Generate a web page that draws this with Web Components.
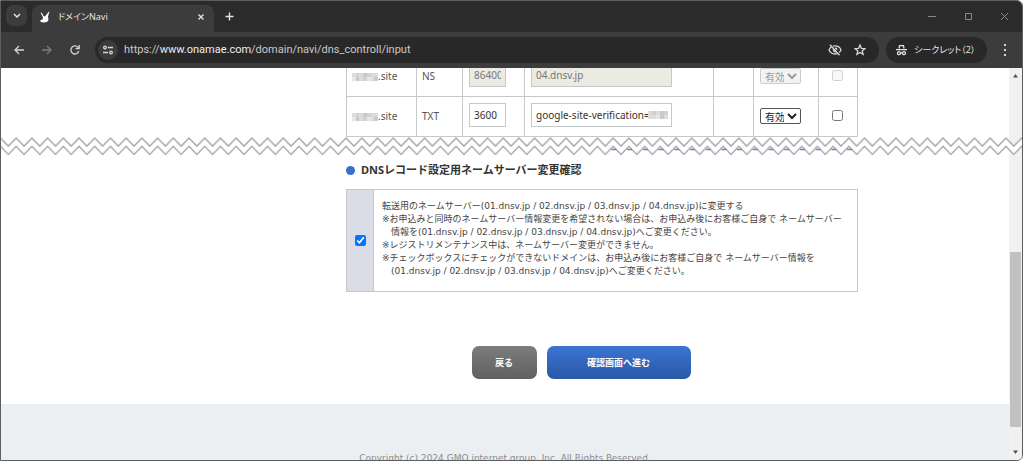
<!DOCTYPE html>
<html lang="ja">
<head>
<meta charset="utf-8">
<title>ドメインNavi</title>
<style>
html,body{margin:0;height:100%}
body{font-family:"Noto Sans","Noto Sans CJK JP",sans-serif;background:#fff;overflow:hidden}
</style>
</head>
<body>
<browser-window>
  <tab-strip slot="chrome">ドメインNavi</tab-strip>
  <address-bar slot="chrome"></address-bar>
  <dns-page></dns-page>
</browser-window>
<script>
const define = (name, html, setup) => {
  const t = document.createElement('template');
  t.innerHTML = html;
  customElements.define(name, class extends HTMLElement {
    constructor() {
      super();
      const root = this.attachShadow({ mode: 'open' });
      root.append(t.content.cloneNode(true));
      if (setup) setup(this, root);
    }
  });
};

define('tab-strip', `
<style>
:host{display:flex;height:31px;background:#2b2b2b;color:#e3e3e3;align-items:stretch;font-feature-settings:"palt"}
button{border:0;padding:0;background:none;color:inherit;display:grid;place-items:center}
svg{display:block;fill:none;stroke:currentColor}
.menu{width:21px;height:21px;margin:4px 5px;border-radius:7px;background:#3c3c3c}
.tab{box-sizing:border-box;width:182px;margin-top:4px;border-radius:8px 8px 0 0;background:#3c3c3c;display:flex;align-items:center;padding:0 9px 4px 8px;gap:8px;font-size:9px;line-height:14px}
.title{flex:1;white-space:nowrap}
.new{width:30px;height:30px}
.gap{flex:1}
.win{width:36px;height:30px;color:#8a8a8a}
</style>
<button class="menu" aria-label="タブを検索"><svg width="8" height="6"><path d="M1 1l3 3 3-3" stroke-width="1.5"/></svg></button>
<div class="tab">
  <svg width="10" height="12" viewBox="0 0 10 12"><path d="M.5 1.500L2 2l1.500 3L5 5.500 8.500 1 9.500.5 8 5.500 8.500 9 7 11 3.500 11.500 1 11 0 9.500 2.500 8.500 3 6.500z" fill="#fff" stroke="none"/></svg>
  <span class="title"><slot></slot></span>
  <button aria-label="閉じる"><svg width="8" height="8"><path d="M1.500 1.500l5 5M6.500 1.500l-5 5" stroke-width="1.400"/></svg></button>
</div>
<button class="new" aria-label="新しいタブ"><svg width="9" height="9"><path d="M4.500 0.500v8M0.500 4.500h8" stroke-width="1.400"/></svg></button>
<span class="gap"></span>
<button class="win" aria-label="最小化"><svg width="8" height="8"><path d="M0 4.500h8"/></svg></button>
<button class="win" aria-label="最大化"><svg width="9" height="9"><path d="M1.500 1.500h6v6h-6z"/></svg></button>
<button class="win" aria-label="ウィンドウを閉じる"><svg width="9" height="9"><path d="M1 1l7 7M8 1l-7 7"/></svg></button>
`);

define('address-bar', `
<style>
:host{display:flex;height:36px;box-sizing:border-box;background:#3c3c3c;color:#d5d5d5;align-items:center;padding:0 4px}
button{border:0;padding:0;background:none;color:inherit;display:grid;place-items:center;width:28px;height:26px}
button:disabled{color:#7c7c7c}
svg{display:block;fill:none;stroke:currentColor;stroke-width:1.3}
.url,.incognito{display:flex;align-items:center;height:26px;border-radius:13px;background:#282828}
.url{flex:1;margin-left:6px}
.site{width:20px;height:20px;border-radius:10px;background:#3c3c3c;margin:0 6px 0 3px}
.text{flex:1;font-family:Roboto,sans-serif;font-size:11px;line-height:16px;white-space:nowrap;color:#c8c8c8}
.text b{font-weight:400;color:#eee}
.act{width:25px}
.last{margin-right:7px}
.incognito{width:101px;box-sizing:border-box;margin:0 4px 0 7px;padding-left:10px;gap:7px;font-size:9px;line-height:14px;white-space:nowrap;color:#e3e3e3;font-feature-settings:"palt"}
.more{width:28px;margin-right:-1px}
</style>
<button aria-label="戻る"><svg width="10" height="10"><path d="M10 5H1.500M5 1L1 5l4 4"/></svg></button>
<button aria-label="進む" disabled><svg width="10" height="10"><path d="M0 5h8.500M5 1l4 4-4 4"/></svg></button>
<button aria-label="再読み込み"><svg width="10" height="10"><path d="M8.800 6A4 4 0 1 1 8 2.400L9 3.500M9.200 0v3.600H5.600"/></svg></button>
<div class="url">
  <button class="site" aria-label="サイト情報"><svg width="10" height="10"><circle cx="2" cy="2.500" r="1.300"/><path d="M4.800 2.500H10M0 7.500h5"/><circle cx="8" cy="7.500" r="1.300"/></svg></button>
  <span class="text">https://<b>www.onamae.com</b>/domain/navi/dns_controll/input</span>
  <button class="act" aria-label="サードパーティ Cookie"><svg width="14" height="12"><path d="M3.500 2.800Q1.800 4 1 6q2 4 6 4 1.200 0 2.300-.4M5 2.200Q11 1 13 6q-.6 1.500-1.900 2.500M2 .8l9.500 10.400M5.500 5A2 2 0 0 0 8 7.700M7 4q1.800.1 2 2"/></svg></button>
  <button class="act last" aria-label="ブックマーク"><svg width="12" height="12"><path d="M6 1l1.400 3.300 3.500.3-2.700 2.300.9 3.500L6 8.500l-3.100 1.900.9-3.500L1.100 4.600l3.500-.3z"/></svg></button>
</div>
<div class="incognito">
  <svg width="11" height="12"><path d="M3 4.500L3.500 1.600h4L8 4.500" /><path d="M0 5.600h11M4.600 9q.9-.6 1.800 0"/><circle cx="3" cy="9.200" r="1.500"/><circle cx="8" cy="9.200" r="1.500"/></svg>
  <span>シークレット（2）</span>
</div>
<button class="more" aria-label="メニュー"><svg width="4" height="12"><path d="M1 0h2v2H1zM1 5h2v2H1zM1 10h2v2H1z" fill="currentColor" stroke="none"/></svg></button>
`);

define('browser-window', `
<style>
:host{display:flex;flex-direction:column;height:100vh;box-sizing:border-box;border:1px solid #5c5e60;position:relative;background:#fff;overflow:hidden;border-radius:0 6px 6px 0}
.view{flex:1;min-height:0;display:flex}
.page{flex:1;min-width:0;overflow:hidden}
torn-edge{position:absolute;left:0;right:0;top:135px}
</style>
<slot name="chrome"></slot>
<div class="view">
  <div class="page"><slot></slot></div>
  <page-scrollbar></page-scrollbar>
</div>
<torn-edge></torn-edge>
`);

define('page-scrollbar', `
<style>
:host{display:flex;flex-direction:column;width:13px;background:#f1f1f1;align-items:center}
svg{display:block;fill:#505050}
.track{flex:1;width:11px;display:flex;flex-direction:column}
.before{flex:169}
.thumb{flex:174;background:#c1c1c1}
.after{flex:18}
</style>
<svg width="13" height="15"><path d="M4 9.500L6.500 6 9 9.500z"/></svg>
<div class="track"><div class="before"></div><div class="thumb"></div><div class="after"></div></div>
<svg width="13" height="15"><path d="M4 5.500L6.500 9 9 5.500z"/></svg>
`);

define('torn-edge', `
<style>:host{display:block}svg{display:block;width:100%;height:20px}</style>
<svg aria-hidden="true">
<defs><pattern id="z" width="15.710" height="20" x="7.350" patternUnits="userSpaceOnUse">
<path d="M-1 9.200L0 10.200 7.855 2 15.710 10.200 16.710 9.200V17.500L15.710 18.500 7.855 10.300 0 18.500-1 17.500z" fill="#fff"/>
<path d="M-1 9.200L0 10.200 7.855 2 15.710 10.200 16.710 9.200M-1 17.500L0 18.500 7.855 10.300 15.710 18.500 16.710 17.500" fill="none" stroke="#a9abad" stroke-width="1.500"/>
</pattern></defs>
<rect width="100%" height="20" fill="url(#z)"/>
<path d="M610.400 13.500H854" stroke="#6f82cc" stroke-width="1.500" stroke-dasharray="5 10.710"/>
</svg>
`);

define('masked-text', `
<style>
:host{display:inline-grid;width:26px;grid-template-columns:repeat(7,1fr);grid-auto-rows:4px;vertical-align:middle}
i{background:#dcdcdc}i:nth-child(3n){background:#d2d2d2}i:nth-child(4n+1){background:#e6e6e6}i:nth-child(5n){background:#c9c9c9}
:host([short]){grid-template-columns:repeat(5,1fr);width:20px}
</style>
`, (el, root) => { for (let n = el.hasAttribute('short') ? 10 : 14; n--;) root.append(document.createElement('i')); });

define('record-table', `
<style>
:host{display:block;color:#555}
table{width:100%;border-collapse:collapse;table-layout:fixed;font-size:10px;line-height:14px}
td{box-sizing:border-box;border:1px solid #c6c8ca;height:40px;padding:0 0 2px 5px;white-space:nowrap}
td.f{padding-bottom:4px}
input[type=text]{box-sizing:border-box;height:24px;width:141px;border:1px solid #c3c8ca;padding:0 4px;font:inherit;color:#333;display:block;margin-left:1px}
input.ttl{width:37px}
input:disabled{background:#ebebe4;color:#777}
.v{position:relative}
.v masked-text{position:absolute;left:123px;top:14px}
select{font:inherit;height:16px;width:41px;padding:0;border:1px solid #555;border-radius:2px;background:#fff;color:#222;display:block;margin-left:1px;line-height:14px}
select:disabled{color:#999;border-color:#ccc;background:#f3f3f3;opacity:1}
input[type=checkbox]{width:11px;height:11px;margin:0 0 0 8px;display:block}
</style>
<table aria-label="DNSレコード">
<colgroup><col style="width:70px"><col style="width:46px"><col style="width:62px"><col style="width:189px"><col style="width:40px"><col style="width:65px"><col style="width:39px"></colgroup>
<tr><td><masked-text></masked-text>.site</td><td>NS</td><td class="f"><input type="text" class="ttl" aria-label="TTL" value="86400" disabled></td><td class="f v"><input type="text" aria-label="VALUE" value="04.dnsv.jp" disabled></td><td></td><td><select aria-label="状態" disabled><option>有効</option></select></td><td><input type="checkbox" aria-label="削除" disabled></td></tr>
<tr><td><masked-text></masked-text>.site</td><td>TXT</td><td class="f"><input type="text" class="ttl" aria-label="TTL" value="3600"></td><td class="f v"><input type="text" aria-label="VALUE" value="google-site-verification="><masked-text short></masked-text></td><td></td><td><select aria-label="状態"><option>有効</option></select></td><td><input type="checkbox" aria-label="削除"></td></tr>
</table>
`);

define('section-title', `
<style>
:host{display:block}
h2{margin:0;display:flex;align-items:center;gap:6px;font-size:11px;line-height:16px;font-weight:700;color:#333}
h2::before{content:"";width:9px;height:9px;border-radius:50%;background:#3c6fc8}
</style>
<h2><slot></slot></h2>
`);

define('nameserver-confirm', `
<style>
:host{display:flex;border:1px solid #c6c8ca;color:#444;font-family:"DejaVu Sans","Noto Sans CJK JP",sans-serif;font-size:9px;line-height:13px}
.check{flex:none;width:26px;background:#dadde6;border-right:1px solid #c6c8ca;display:grid;place-items:center}
input{width:11px;height:11px;margin:0}
.text{flex:1;padding:9px 8px 13px}
label{display:block;line-height:14px}
ul{list-style:none;margin:0;padding:0 0 0 9px}
li{text-indent:-9px;white-space:nowrap}
</style>
<div class="check"><input type="checkbox" id="c" checked></div>
<div class="text">
<label for="c">転送用のネームサーバー(01.dnsv.jp / 02.dnsv.jp / 03.dnsv.jp / 04.dnsv.jp)に変更する</label>
<ul>
<li>※お申込みと同時のネームサーバー情報変更を希望されない場合は、お申込み後にお客様ご自身で ネームサーバー<br>情報を(01.dnsv.jp / 02.dnsv.jp / 03.dnsv.jp / 04.dnsv.jp)へご変更ください。</li>
<li>※レジストリメンテナンス中は、ネームサーバー変更ができません。</li>
<li>※チェックボックスにチェックができないドメインは、お申込み後にお客様ご自身で ネームサーバー情報を<br>(01.dnsv.jp / 02.dnsv.jp / 03.dnsv.jp / 04.dnsv.jp)へご変更ください。</li>
</ul>
</div>
`);

define('action-button', `
<style>
:host{display:block;width:65px}
:host([primary]){width:144px}
button{width:100%;height:33px;border:0;border-radius:7px;padding:0;color:#fff;font:inherit;font-size:9px;font-weight:700;line-height:14px;background:linear-gradient(#7c7c7c,#606060)}
:host([primary]) button{background:linear-gradient(#3b74d2,#2a59a6)}
</style>
<button type="button"><slot></slot></button>
`);

define('dns-page', `
<style>
:host{display:flex;flex-direction:column;height:100%}
main{display:grid;grid-template-columns:345fr 512px 151fr}
.col{grid-column:2}
.records{height:69px;overflow:hidden;display:flex;flex-direction:column;justify-content:flex-end}
section-title{margin:25px 0 11px}
.actions{display:flex;justify-content:center;gap:10px;padding:54px 42px 25px 0}
footer{flex:1;background:#ebeff2;color:#8b8d8f;text-align:center;font-family:"DejaVu Sans",sans-serif;font-size:9px;line-height:14px;padding-top:47px}
</style>
<main><div class="col">
  <div class="records"><record-table></record-table></div>
  <section-title>DNSレコード設定用ネームサーバー変更確認</section-title>
  <nameserver-confirm></nameserver-confirm>
  <div class="actions"><action-button>戻る</action-button><action-button primary>確認画面へ進む</action-button></div>
</div></main>
<footer>Copyright (c) 2024 GMO internet group, Inc. All Rights Reserved.</footer>
`);
</script>
</body>
</html>
